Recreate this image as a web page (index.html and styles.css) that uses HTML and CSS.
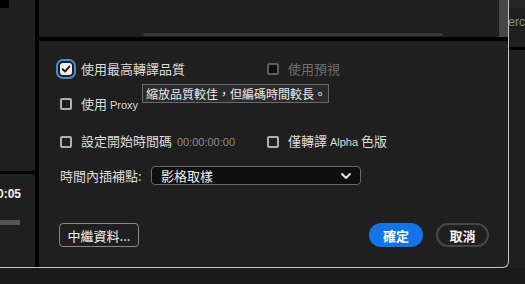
FILE: index.html
```html
<!DOCTYPE html>
<html lang="zh-Hant">
<head>
<meta charset="utf-8">
<link rel="stylesheet" href="styles.css">
</head>
<body>
<div class="screen">
  <div class="window">
    <aside class="left">
      <div class="left-top"><div class="corner"></div></div>
      <div class="left-bottom">
        <div class="tc"><span>00:05</span></div>
        <div class="slider"></div>
      </div>
    </aside>
    <div class="divider"></div>
    <main class="main">
      <div class="topstrip">
        <div class="hscroll"></div>
        <div class="vscroll"></div>
      </div>
      <section class="dialog">
        <div class="row row1">
          <label class="item">
            <span class="box checked focus"><svg viewBox="0 0 12 12" width="12" height="12"><path d="M2.6 6.2 L5 8.5 L9.4 3.6" fill="none" stroke="#1e1e1e" stroke-width="1.9" stroke-linecap="round" stroke-linejoin="round"/></svg></span>
            <span class="txt">使用最高轉譯品質</span>
          </label>
          <label class="item disabled">
            <span class="box"></span>
            <span class="txt">使用預視</span>
          </label>
        </div>
        <div class="row row2">
          <label class="item">
            <span class="box"></span>
            <span class="txt">使用 <span class="latin">Proxy</span></span>
          </label>
        </div>
        <div class="row row3">
          <label class="item">
            <span class="box"></span>
            <span class="txt">設定開始時間碼 <span class="tcode">00:00:00:00</span></span>
          </label>
          <label class="item">
            <span class="box"></span>
            <span class="txt">僅轉譯 <span class="latin">Alpha</span> 色版</span>
          </label>
        </div>
        <div class="row row4">
          <span class="field-label">時間內插補點:</span>
          <div class="select">
            <span>影格取樣</span>
            <svg viewBox="0 0 10 6" width="10" height="6"><polyline points="1,1 5,5 9,1" fill="none" stroke="#f0f0f0" stroke-width="1.8" stroke-linecap="round" stroke-linejoin="round"/></svg>
          </div>
        </div>
        <div class="row buttons">
          <button class="btn meta">中繼資料...</button>
          <div class="spacer"></div>
          <button class="btn primary">確定</button>
          <button class="btn secondary">取消</button>
        </div>
        <div class="tooltip">縮放品質較佳，但編碼時間較長。</div>
      </section>
    </main>
  </div>
  <div class="right">
    <div class="right-top"></div>
    <div class="right-text"><span>Perc</span></div>
  </div>
  <div class="bottom"></div>
</div>
</body>
</html>
```

FILE: styles.css
```css
* { box-sizing: border-box; }
html, body { margin: 0; padding: 0; }
body {
  width: 525px;
  height: 284px;
  overflow: hidden;
  background: #1a1a1a;
  font-family: "Noto Sans CJK TC", "Noto Sans", sans-serif;
  color: #dcdcdc;
}
.screen {
  display: grid;
  grid-template-columns: 509px 16px;
  grid-template-rows: 268px 16px;
  width: 525px;
  height: 284px;
}
.window {
  display: flex;
  background: #1f1f1f;
  border-right: 1px solid #c4c4c4;
  border-bottom: 1px solid #c4c4c4;
  border-bottom-right-radius: 6px;
  overflow: hidden;
}
.left {
  width: 35px;
  display: flex;
  flex-direction: column;
  flex: none;
}
.left-top {
  height: 174px;
  border-bottom: 3px solid #000;
}
.corner {
  width: 9px;
  height: 8px;
  background: #000;
}
.left-bottom {
  display: flex;
  flex-direction: column;
}
.tc {
  width: 21px;
  display: flex;
  justify-content: flex-end;
  margin-top: 12px;
  height: 16px;
  font-family: "Liberation Sans", sans-serif;
  font-weight: bold;
  font-size: 12px;
  line-height: 16px;
  color: #f2f2f2;
  white-space: nowrap;
}
.slider {
  width: 20px;
  height: 5px;
  margin-top: 18px;
  background: #555;
}
.divider {
  width: 4px;
  flex: none;
  background: #000;
}
.main {
  flex: 1;
  display: flex;
  flex-direction: column;
}
.topstrip {
  height: 41px;
  display: flex;
  border-bottom: 4px solid #000;
  flex: none;
}
.hscroll {
  align-self: flex-end;
  margin-left: 104px;
  width: 300px;
  height: 3px;
  margin-bottom: 1px;
  background: #3a3a3a;
  border-radius: 2px;
}
.vscroll {
  margin-left: auto;
  width: 9px;
  background: #474747;
}
.dialog {
  position: relative;
  flex: 1;
  display: flex;
  flex-direction: column;
  padding: 18px 19px 0 21px;
}
.row {
  display: flex;
  align-items: center;
  height: 20px;
}
.row1, .row3 {
  display: grid;
  grid-template-columns: 207px auto;
}
.row2 { margin-top: 15px; }
.row3 { margin-top: 17px; }
.row4 { margin-top: 15px; height: 19px; }
.buttons { margin-top: 38px; height: 24px; }
.item {
  display: flex;
  align-items: center;
  gap: 9px;
  font-size: 13px;
  line-height: 20px;
  white-space: nowrap;
}
.box {
  width: 12px;
  height: 12px;
  border: 2px solid #b0b0b0;
  border-radius: 2px;
  flex: none;
  display: flex;
}
.box.checked {
  border: none;
  background: #f2f2f2;
}
.box.focus {
  box-shadow: 0 0 0 2px #1f1f1f, 0 0 0 4px #4a8bd6;
  border-radius: 3px;
}
.disabled { color: #6e6e6e; }
.disabled .box {
  border-color: #5e5e5e;
  background: #0e0e0e;
}
.latin {
  font-family: "Liberation Sans", sans-serif;
  font-size: 11px;
}
.tcode {
  font-family: "Liberation Sans", sans-serif;
  font-size: 11px;
  color: #8a8a8a;
  margin-left: 2px;
}
.field-label {
  width: 91px;
  font-size: 13px;
  line-height: 19px;
  white-space: nowrap;
}
.select {
  width: 210px;
  height: 19px;
  background: #0f0f0f;
  border: 1px solid #6a6a6a;
  border-radius: 4px;
  display: flex;
  align-items: center;
  justify-content: space-between;
  padding: 0 9px 0 9px;
  font-size: 13px;
  color: #ececec;
}
.btn {
  font-family: "Noto Sans CJK TC", sans-serif;
  font-size: 13px;
  height: 24px;
  padding: 0;
  color: #f2f2f2;
  background: transparent;
  display: flex;
  align-items: center;
  justify-content: center;
}
.meta {
  width: 80px;
  margin-left: -1px;
  border: 1px solid #8a8a8a;
  border-radius: 4px;
}
.spacer { flex: 1; }
.primary {
  width: 54px;
  border: none;
  border-radius: 12px;
  background: #1473e6;
  font-weight: bold;
  color: #fff;
}
.secondary {
  width: 53px;
  margin-left: 13px;
  border: 2px solid #474747;
  border-radius: 12px;
  font-weight: bold;
}
.tooltip {
  position: absolute;
  left: 103px;
  top: 43px;
  width: 187px;
  height: 19px;
  background: #2b2b2b;
  border: 1px solid #6b6b6b;
  font-size: 12px;
  line-height: 17px;
  padding: 0 3px;
  color: #ececec;
  white-space: nowrap;
}
.right {
  background: #1f1f1f;
  display: flex;
  flex-direction: column;
  overflow: hidden;
}
.right-top {
  height: 8px;
  background: #262626;
}
.right-text {
  display: flex;
  justify-content: flex-end;
  height: 42px;
  padding-top: 7px;
  border-bottom: 3px solid #000;
  box-sizing: content-box;
  font-family: "Liberation Sans", sans-serif;
  font-size: 12px;
  color: #8a8a8a;
  white-space: nowrap;
  height: 32px;
}
.bottom {
  grid-column: 1 / 3;
  background: #1a1a1a;
}
```
